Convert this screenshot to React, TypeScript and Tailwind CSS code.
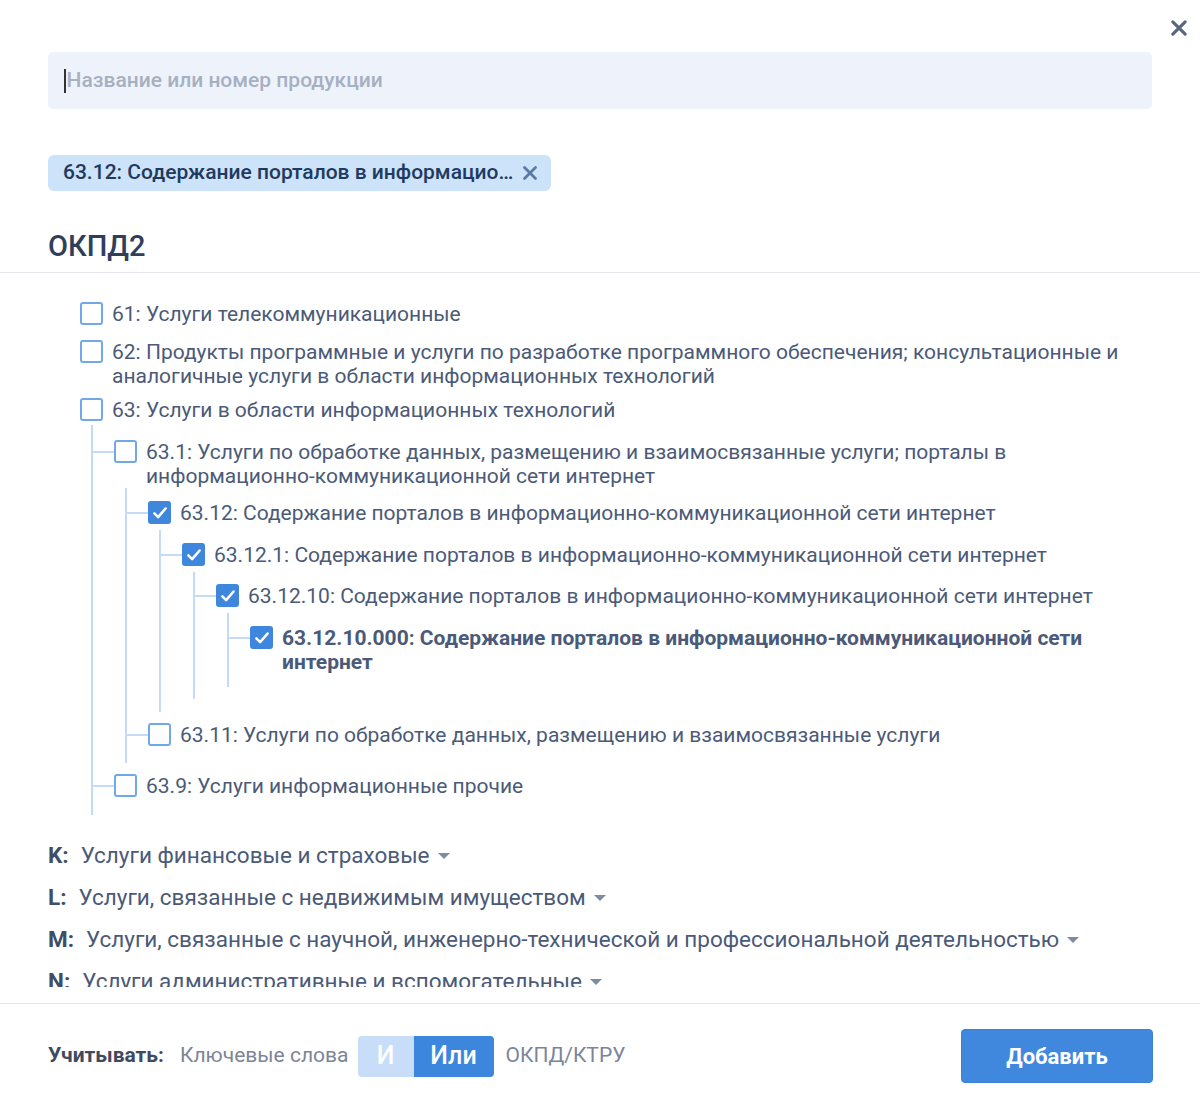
import React from "react";

const LINE = "bg-[#c3dbf6]";

function Checkbox({ checked }: { checked?: boolean }) {
  if (checked) {
    return (
      <span className="flex h-[23px] w-[23px] shrink-0 items-center justify-center rounded-[3px] bg-[#3e87dd]">
        <svg width="18" height="18" viewBox="0 0 24 24" fill="none">
          <path d="M4.5 12.5l5 5L19.5 6" stroke="white" strokeWidth="3.4" strokeLinecap="round" strokeLinejoin="round" />
        </svg>
      </span>
    );
  }
  return <span className="block h-[23px] w-[23px] shrink-0 rounded-[3px] border-[2.5px] border-[#72a8ea] bg-white" />;
}

type NodeProps = {
  label: React.ReactNode;
  checked?: boolean;
  bold?: boolean;
  pt: string;
  connector?: boolean;
  cmt?: string;
  cpb?: string;
  children?: React.ReactNode;
};

function Node({ label, checked, bold, pt, connector, cmt, cpb, children }: NodeProps) {
  return (
    <div className={pt}>
      <div className="relative flex items-start gap-[9px]">
        {connector && <span className={`absolute left-[-21px] top-[11px] h-[2px] w-[21px] ${LINE}`} />}
        <Checkbox checked={checked} />
        <span className={`text-[21px] leading-[24px] text-[#4b5a78] ${bold ? "font-bold" : ""}`}>{label}</span>
      </div>
      {children && (
        <div className={`ml-[11px] border-l-2 border-[#c3dbf6] pl-[21px] ${cmt ?? ""} ${cpb ?? ""}`}>{children}</div>
      )}
    </div>
  );
}

function Caret() {
  return (
    <svg width="12" height="7" viewBox="0 0 12 7" className="ml-[8px] mt-[3px]">
      <path d="M0 0h12L6 6z" fill="#7f8ba1" />
    </svg>
  );
}

function Category({ letter, text }: { letter: string; text: string }) {
  return (
    <div className="flex h-[42px] items-center text-[22.5px] leading-[26px]">
      <span className="font-bold text-[#404d67]">{letter}:</span>
      <span className="ml-[12px] text-[#4b5a78]">{text}</span>
      <Caret />
    </div>
  );
}

function XIcon({ size, color, stroke }: { size: number; color: string; stroke: number }) {
  return (
    <svg width={size} height={size} viewBox="0 0 16 16" fill="none">
      <path d="M2.5 2.5l11 11M13.5 2.5l-11 11" stroke={color} strokeWidth={stroke} strokeLinecap="round" />
    </svg>
  );
}

export default function App() {
  return (
    <div className="relative flex h-[1098px] w-[1200px] flex-col overflow-hidden bg-white font-['Roboto',sans-serif]">
      <button className="absolute right-[12px] top-[19px] flex h-[18px] w-[18px] items-center justify-center">
        <XIcon size={18} color="#5a6580" stroke={2.8} />
      </button>

      {/* Header */}
      <div className="h-[273px] shrink-0 border-b border-[#e4e8ee] px-[48px] pt-[52px]">
        <div className="flex h-[57px] w-full items-center rounded-[5px] bg-[#eef3fb] pl-[16px]">
          <span className="mr-[1px] h-[24px] w-[1.5px] bg-[#333]" />
          <span className="text-[21px] font-medium text-[#a6b0c1]">Название или номер продукции</span>
        </div>
        <div className="mt-[46px] inline-flex h-[36px] items-center rounded-[6px] bg-[#cce3fa] pl-[15px] pr-[13px]">
          <span className="text-[21px] font-medium text-[#1f3a60]">63.12: Содержание порталов в информацио…</span>
          <span className="ml-[9px] flex items-center">
            <XIcon size={16} color="#5a7aa3" stroke={2.8} />
          </span>
        </div>
        <div className="mt-[37px] text-[29px] font-medium leading-[36px] text-[#2f3e5b]">ОКПД2</div>
      </div>

      {/* Body */}
      <div className="h-[730px] shrink-0 pb-[16px]">
        <div className="h-[714px] overflow-hidden">
          <div className="pl-[80px] pr-[47px]">
            <Node pt="pt-[29px]" label="61: Услуги телекоммуникационные" />
            <Node
              pt="pt-[14px]"
              label="62: Продукты программные и услуги по разработке программного обеспечения; консультационные и аналогичные услуги в области информационных технологий"
            />
            <Node pt="pt-[10px]" label="63: Услуги в области информационных технологий" cmt="mt-[3px]" cpb="pb-[17px]">
              <Node
                pt="pt-[15px]"
                connector
                label={
                  <>
                    63.1: Услуги по обработке данных, размещению и взаимосвязанные услуги; порталы в{" "}
                    <span className="whitespace-nowrap">информационно-коммуникационной</span> сети интернет
                  </>
                }
                cmt="mt-0"
                cpb="pb-[16px]"
              >
                <Node
                  pt="pt-[13px]"
                  connector
                  checked
                  label="63.12: Содержание порталов в информационно-коммуникационной сети интернет"
                  cmt="mt-[5px]"
                  cpb="pb-[13px]"
                >
                  <Node
                    pt="pt-[13px]"
                    connector
                    checked
                    label="63.12.1: Содержание порталов в информационно-коммуникационной сети интернет"
                    cmt="mt-[5px]"
                    cpb="pb-[12px]"
                  >
                    <Node
                      pt="pt-[12px]"
                      connector
                      checked
                      label="63.12.10: Содержание порталов в информационно-коммуникационной сети интернет"
                      cmt="mt-[5px]"
                      cpb="pb-[13px]"
                    >
                      <Node
                        pt="pt-[13px]"
                        connector
                        checked
                        bold
                        label="63.12.10.000: Содержание порталов в информационно-коммуникационной сети интернет"
                      />
                    </Node>
                  </Node>
                </Node>
                <Node
                  pt="pt-[11px]"
                  connector
                  label="63.11: Услуги по обработке данных, размещению и взаимосвязанные услуги"
                />
              </Node>
              <Node pt="pt-[11px]" connector label="63.9: Услуги информационные прочие" />
            </Node>
          </div>
          <div className="mt-[19px] pl-[48px]">
            <Category letter="K" text="Услуги финансовые и страховые" />
            <Category letter="L" text="Услуги, связанные с недвижимым имуществом" />
            <Category letter="M" text="Услуги, связанные с научной, инженерно-технической и профессиональной деятельностью" />
            <Category letter="N" text="Услуги административные и вспомогательные" />
          </div>
        </div>
      </div>

      {/* Footer */}
      <div className="flex h-[95px] shrink-0 items-start border-t border-[#e4e8ee] pl-[48px] pr-[47px] pt-[25px]">
        <div className="flex h-[54px] flex-1 items-center text-[21px]">
          <span className="font-bold text-[#3f4a5f]">Учитывать:</span>
          <span className="ml-[16px] text-[#7b8597]">Ключевые слова</span>
          <div className="ml-[9px] flex h-[41px] overflow-hidden rounded-[4px]">
            <span className="flex w-[56px] items-center justify-center bg-[#c8ddf7] text-[25px] font-medium text-white">И</span>
            <span className="flex w-[80px] items-center justify-center bg-[#3d86dd] text-[25px] font-medium text-white">Или</span>
          </div>
          <span className="ml-[12px] text-[#7b8597]">ОКПД/КТРУ</span>
        </div>
        <button className="flex h-[54px] w-[192px] items-center justify-center rounded-[4px] border border-[#3a80d4] bg-[#3f88de] text-[22px] font-bold text-white">
          Добавить
        </button>
      </div>
    </div>
  );
}
